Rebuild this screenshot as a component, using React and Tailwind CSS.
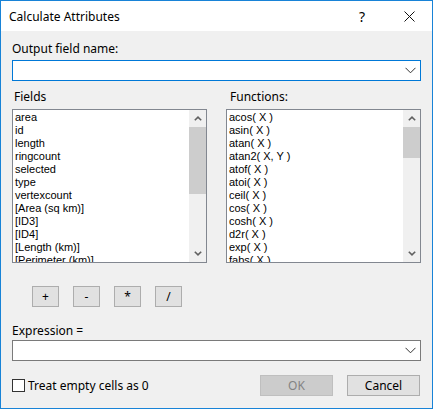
import React from "react";

const fields = [
  "area",
  "id",
  "length",
  "ringcount",
  "selected",
  "type",
  "vertexcount",
  "[Area (sq km)]",
  "[ID3]",
  "[ID4]",
  "[Length (km)]",
  "[Perimeter (km)]",
];

const functions = [
  "acos( X )",
  "asin( X )",
  "atan( X )",
  "atan2( X, Y )",
  "atof( X )",
  "atoi( X )",
  "ceil( X )",
  "cos( X )",
  "cosh( X )",
  "d2r( X )",
  "exp( X )",
  "fabs( X )",
];

function Chevron() {
  return (
    <svg width="11" height="7" viewBox="0 0 11 7" className="shrink-0">
      <polyline points="0.5,0.8 5.5,5.8 10.5,0.8" fill="none" stroke="#333" strokeWidth="1" />
    </svg>
  );
}

function Caret({ down }) {
  return (
    <svg width="8" height="5" viewBox="0 0 8 5" className={down ? "rotate-180" : ""}>
      <polyline points="0.8,4.3 4,1.2 7.2,4.3" fill="none" stroke="#606060" strokeWidth="1.6" />
    </svg>
  );
}

function Combo({ focused }) {
  return (
    <div
      className={
        "h-[21px] bg-white border flex items-center justify-end pr-[4px] " +
        (focused ? "border-[#0078d7]" : "border-[#7a7a7a]")
      }
    >
      <Chevron />
    </div>
  );
}

function ListBox({ items, thumb }) {
  return (
    <div className="w-[195px] h-[154px] border border-[#828790] bg-white flex overflow-hidden">
      <div className="flex-1 pl-[2px] pt-[1px] font-['Liberation_Sans',sans-serif] text-[11px] leading-[13px] text-black overflow-hidden">
        {items.map((item) => (
          <div key={item} className="whitespace-pre">{item}</div>
        ))}
      </div>
      <div className="w-[17px] bg-[#f0f0f0] flex flex-col">
        <div className="h-[17px] flex items-center justify-center">
          <Caret />
        </div>
        <div className={"bg-[#cdcdcd] " + thumb}></div>
        <div className="flex-1"></div>
        <div className="h-[17px] flex items-center justify-center">
          <Caret down />
        </div>
      </div>
    </div>
  );
}

function Btn({ children, disabled, className = "" }) {
  return (
    <div
      className={
        "h-[21px] flex items-center justify-center border text-[12px] " +
        (disabled
          ? "bg-[#cccccc] border-[#bfbfbf] text-[#838383] "
          : "bg-[#e1e1e1] border-[#adadad] text-black ") +
        className
      }
    >
      {children}
    </div>
  );
}

export default function App() {
  return (
    <div className="w-[433px] h-[409px] border border-[#1883d7] bg-[#f0f0f0] flex flex-col font-['Noto_Sans',sans-serif] text-black text-[12px] leading-[15px] overflow-hidden">
      {/* title bar */}
      <div className="h-[30px] bg-white flex items-center pl-[8px] shrink-0">
        <div className="flex-1 text-[12px]">Calculate Attributes</div>
        <div className="w-[46px] flex justify-center text-[14px] mr-[1px]">?</div>
        <div className="w-[46px] flex justify-center">
          <svg width="11" height="11" viewBox="0 0 11 11">
            <path d="M0.5 0.5 L10.5 10.5 M10.5 0.5 L0.5 10.5" stroke="#111" strokeWidth="1" />
          </svg>
        </div>
      </div>

      {/* body */}
      <div className="flex flex-col px-[11px] pt-[10px]">
        <div>Output field name:</div>
        <div className="mt-[4px]">
          <Combo focused />
        </div>

        <div className="flex gap-[19px] mt-[8px]">
          <div className="flex flex-col">
            <div className="pl-[2px]">Fields</div>
            <div className="mt-[5px]">
              <ListBox items={fields} thumb="h-[67px]" />
            </div>
          </div>
          <div className="flex flex-col">
            <div className="pl-[4px]">Functions:</div>
            <div className="mt-[5px]">
              <ListBox items={functions} thumb="h-[31px]" />
            </div>
          </div>
        </div>

        <div className="flex gap-[14px] ml-[20px] mt-[23px]">
          <Btn className="w-[27px]">+</Btn>
          <Btn className="w-[27px]">-</Btn>
          <Btn className="w-[27px]">*</Btn>
          <Btn className="w-[27px]">/</Btn>
        </div>

        <div className="mt-[16px]">Expression =</div>
        <div className="mt-[2px]">
          <Combo />
        </div>

        <div className="flex items-center mt-[14px]">
          <div className="w-[13px] h-[13px] border border-[#333] bg-white"></div>
          <div className="ml-[3px] flex-1">Treat empty cells as 0</div>
          <Btn disabled className="w-[73px]">OK</Btn>
          <Btn className="w-[73px] ml-[14px] mr-[1px]">Cancel</Btn>
        </div>
      </div>
    </div>
  );
}
